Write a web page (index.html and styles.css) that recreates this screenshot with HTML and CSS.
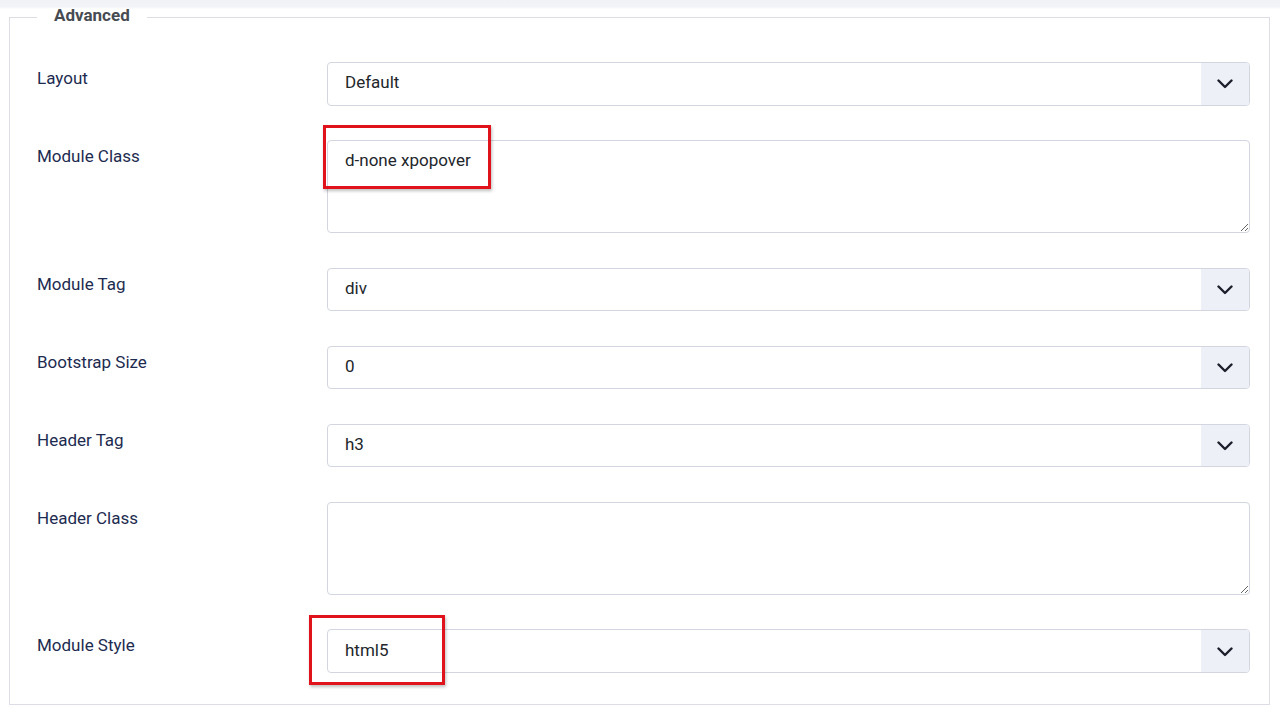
FILE: index.html
```html
<!DOCTYPE html>
<html lang="en">
<head>
<meta charset="utf-8">
<title>Advanced</title>
<link rel="stylesheet" href="styles.css">
</head>
<body>
<div class="page">
  <fieldset class="options">
    <legend class="options-legend">Advanced</legend>

    <div class="row">
      <div class="label">Layout</div>
      <div class="select"><span class="value">Default</span><span class="arrow"><svg width="16" height="10" viewBox="0 0 16 10"><path d="M1.5 1.5 L8 8 L14.5 1.5" fill="none" stroke="#1d1f2b" stroke-width="2.4" stroke-linecap="round" stroke-linejoin="round"/></svg></span></div>
    </div>

    <div class="row">
      <div class="label">Module Class</div>
      <textarea class="textarea" readonly>d-none xpopover</textarea>
    </div>

    <div class="row">
      <div class="label">Module Tag</div>
      <div class="select"><span class="value">div</span><span class="arrow"><svg width="16" height="10" viewBox="0 0 16 10"><path d="M1.5 1.5 L8 8 L14.5 1.5" fill="none" stroke="#1d1f2b" stroke-width="2.4" stroke-linecap="round" stroke-linejoin="round"/></svg></span></div>
    </div>

    <div class="row">
      <div class="label">Bootstrap Size</div>
      <div class="select"><span class="value">0</span><span class="arrow"><svg width="16" height="10" viewBox="0 0 16 10"><path d="M1.5 1.5 L8 8 L14.5 1.5" fill="none" stroke="#1d1f2b" stroke-width="2.4" stroke-linecap="round" stroke-linejoin="round"/></svg></span></div>
    </div>

    <div class="row">
      <div class="label">Header Tag</div>
      <div class="select"><span class="value">h3</span><span class="arrow"><svg width="16" height="10" viewBox="0 0 16 10"><path d="M1.5 1.5 L8 8 L14.5 1.5" fill="none" stroke="#1d1f2b" stroke-width="2.4" stroke-linecap="round" stroke-linejoin="round"/></svg></span></div>
    </div>

    <div class="row">
      <div class="label">Header Class</div>
      <textarea class="textarea" readonly></textarea>
    </div>

    <div class="row">
      <div class="label">Module Style</div>
      <div class="select"><span class="value">html5</span><span class="arrow"><svg width="16" height="10" viewBox="0 0 16 10"><path d="M1.5 1.5 L8 8 L14.5 1.5" fill="none" stroke="#1d1f2b" stroke-width="2.4" stroke-linecap="round" stroke-linejoin="round"/></svg></span></div>
    </div>
  </fieldset>

  <div class="highlight highlight-class"></div>
  <div class="highlight highlight-style"></div>
</div>
</body>
</html>
```

FILE: styles.css
```css
* { box-sizing: border-box; }

html, body {
  margin: 0;
  padding: 0;
}

body {
  background: linear-gradient(#f1f2f6 0, #f3f4f7 7px, #ffffff 9px);
  font-family: Roboto, "Liberation Sans", sans-serif;
  font-size: 17px;
  width: 1280px;
  height: 719px;
  overflow: hidden;
}

.page {
  position: relative;
  padding: 7px 10px 0 9px;
}

.options {
  margin: 0;
  border: 1px solid #dcdde7;
  padding: 35px 19px 0 27px;
  min-width: 0;
}

.options-legend {
  margin-left: 0;
  padding: 0 17px 4px 17px;
  font-size: 17px;
  line-height: 16px;
  font-weight: 700;
  color: #474b52;
}

.row {
  display: grid;
  grid-template-columns: 290px 1fr;
  align-items: start;
  margin-bottom: 34.55px;
}

.row:last-child {
  margin-bottom: 31.5px;
}

.label {
  padding-top: 4px;
  color: #1d2b50;
  line-height: 25px;
}

.select {
  display: flex;
  align-items: stretch;
  height: 43.5px;
  border: 1px solid #d3d6e0;
  border-radius: 4px;
  background: #fff;
  overflow: hidden;
}

.value {
  flex: 1;
  display: flex;
  align-items: center;
  padding-left: 17px;
  padding-bottom: 3px;
  color: #22262b;
}

.arrow {
  width: 48px;
  display: flex;
  align-items: center;
  justify-content: center;
  background: #eef0f8;
  padding-top: 1px;
}

.textarea {
  display: block;
  width: 100%;
  height: 93px;
  margin: 0;
  border: 1px solid #d3d6e0;
  border-radius: 4px;
  padding: 7px 17px;
  font-family: Roboto, "Liberation Sans", sans-serif;
  font-size: 17px;
  line-height: 24px;
  color: #22262b;
  background: #fff;
  resize: vertical;
  outline: none;
}

.highlight {
  position: absolute;
  border: 3px solid #e0121b;
  box-shadow: 1px 2px 3px rgba(0, 0, 0, 0.25);
}

.highlight-class {
  left: 323px;
  top: 125px;
  width: 168px;
  height: 64px;
}

.highlight-style {
  left: 309px;
  top: 615px;
  width: 136px;
  height: 70px;
}
```
